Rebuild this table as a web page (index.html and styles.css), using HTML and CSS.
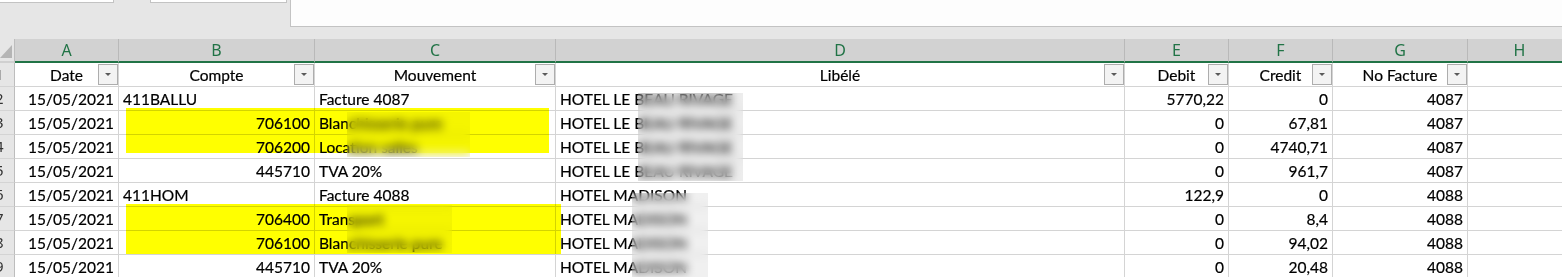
FILE: index.html
```html
<!DOCTYPE html>
<html lang="fr">
<head>
    <meta charset="UTF-8">
    <title>Ecritures - Classeur</title>
    <link rel="stylesheet" href="styles.css">
</head>
<body>
    <!-- barre de formule (coupée en haut) -->
    <div class="toolbar">
        <div class="namebox"></div>
        <div class="fxbox"></div>
        <div class="formula"></div>
    </div>

    <div class="sheet">
        <div class="grid">
            <!-- en-têtes de colonnes -->
            <div class="corner"><span class="select-all"></span></div>
            <div class="colhead">A</div>
            <div class="colhead">B</div>
            <div class="colhead">C</div>
            <div class="colhead">D</div>
            <div class="colhead">E</div>
            <div class="colhead">F</div>
            <div class="colhead">G</div>
            <div class="colhead">H</div>

            <!-- ligne 1 : titres avec filtres -->
            <div class="rh">1</div>
            <div class="c th"><span class="lbl">Date</span><span class="filter"></span></div>
            <div class="c th"><span class="lbl">Compte</span><span class="filter"></span></div>
            <div class="c th"><span class="lbl">Mouvement</span><span class="filter"></span></div>
            <div class="c th"><span class="lbl">Libélé</span><span class="filter"></span></div>
            <div class="c th"><span class="lbl">Debit</span><span class="filter"></span></div>
            <div class="c th"><span class="lbl">Credit</span><span class="filter"></span></div>
            <div class="c th"><span class="lbl">No Facture</span><span class="filter"></span></div>
            <div class="c"></div>

            <div class="rh">2</div>
            <div class="c r">15/05/2021</div>
            <div class="c">411BALLU</div>
            <div class="c">Facture 4087</div>
            <div class="c">HOTEL LE BEAU RIVAGE</div>
            <div class="c r">5770,22</div>
            <div class="c r">0</div>
            <div class="c r">4087</div>
            <div class="c"></div>

            <div class="rh">3</div>
            <div class="c r">15/05/2021</div>
            <div class="c r">706100</div>
            <div class="c">Blanchisserie pure</div>
            <div class="c">HOTEL LE BEAU RIVAGE</div>
            <div class="c r">0</div>
            <div class="c r">67,81</div>
            <div class="c r">4087</div>
            <div class="c"></div>

            <div class="rh">4</div>
            <div class="c r">15/05/2021</div>
            <div class="c r">706200</div>
            <div class="c">Location salles</div>
            <div class="c">HOTEL LE BEAU RIVAGE</div>
            <div class="c r">0</div>
            <div class="c r">4740,71</div>
            <div class="c r">4087</div>
            <div class="c"></div>

            <div class="rh">5</div>
            <div class="c r">15/05/2021</div>
            <div class="c r">445710</div>
            <div class="c">TVA 20%</div>
            <div class="c">HOTEL LE BEAU RIVAGE</div>
            <div class="c r">0</div>
            <div class="c r">961,7</div>
            <div class="c r">4087</div>
            <div class="c"></div>

            <div class="rh">6</div>
            <div class="c r">15/05/2021</div>
            <div class="c">411HOM</div>
            <div class="c">Facture 4088</div>
            <div class="c">HOTEL MADISON</div>
            <div class="c r">122,9</div>
            <div class="c r">0</div>
            <div class="c r">4088</div>
            <div class="c"></div>

            <div class="rh">7</div>
            <div class="c r">15/05/2021</div>
            <div class="c r">706400</div>
            <div class="c">Transport</div>
            <div class="c">HOTEL MADISON</div>
            <div class="c r">0</div>
            <div class="c r">8,4</div>
            <div class="c r">4088</div>
            <div class="c"></div>

            <div class="rh">8</div>
            <div class="c r">15/05/2021</div>
            <div class="c r">706100</div>
            <div class="c">Blanchisserie pure</div>
            <div class="c">HOTEL MADISON</div>
            <div class="c r">0</div>
            <div class="c r">94,02</div>
            <div class="c r">4088</div>
            <div class="c"></div>

            <div class="rh">9</div>
            <div class="c r">15/05/2021</div>
            <div class="c r">445710</div>
            <div class="c">TVA 20%</div>
            <div class="c">HOTEL MADISON</div>
            <div class="c r">0</div>
            <div class="c r">20,48</div>
            <div class="c r">4088</div>
            <div class="c"></div>
        </div>

        <!-- surlignage -->
        <div class="hl hl-1"></div>
        <div class="hl hl-2"></div>

        <!-- zones masquées -->
        <div class="mask mask-c1"></div>
        <div class="mask mask-c2"></div>
        <div class="mask mask-d1"></div>
        <div class="mask mask-d2"></div>
    </div>
</body>
</html>
```

FILE: styles.css
```css
body {
    margin: 0;
    width: 1562px;
    height: 277px;
    overflow: hidden;
    background: #fff;
    font-family: Lato, "Liberation Sans", sans-serif;
    color: #000;
}

/* barre du haut */
.toolbar {
    display: flex;
    align-items: flex-start;
    height: 39px;
    background: #e6e6e6;
}
.namebox {
    width: 113px;
    height: 2px;
    background: #fff;
    border-right: 1px solid #c3c3c3;
    border-bottom: 1px solid #c3c3c3;
}
.fxbox {
    width: 135px;
    height: 2px;
    margin-left: 36px;
    background: #fff;
    border: 1px solid #c3c3c3;
    border-top: none;
}
.formula {
    flex: 1;
    height: 26px;
    margin-left: 3px;
    background: #fdfdfd;
    border-left: 1px solid #c3c3c3;
    border-bottom: 1px solid #c3c3c3;
}

/* feuille */
.sheet {
    position: relative;
}
.grid {
    display: grid;
    grid-template-columns: 15px 104px 196px 241px 569px 104px 104px 135px 104px;
    grid-auto-rows: 24px;
}
.corner {
    position: relative;
    background: #e6e6e6;
    border-right: 1px solid #bdbdbd;
    border-bottom: 2px solid #d0d0d0;
}
.select-all {
    position: absolute;
    right: 2px;
    bottom: 3px;
    width: 0;
    height: 0;
    border-left: 12px solid transparent;
    border-bottom: 13px solid #b5b5b5;
}
.colhead {
    background: #d2d2d2;
    border-right: 1px solid #b9b9b9;
    border-bottom: 2px solid #217346;
    text-align: center;
    font-family: "Noto Sans", sans-serif;
    font-size: 16px;
    line-height: 22px;
    color: #217346;
}
.rh {
    background: #e6e6e6;
    border-right: 1px solid #bdbdbd;
    border-bottom: 1px solid #d4d4d4;
    overflow: hidden;
    white-space: nowrap;
    text-indent: -5px;
    font-family: "Noto Sans", sans-serif;
    font-size: 15px;
    line-height: 23px;
    color: #333;
}
.c {
    border-right: 1px solid #d4d4d4;
    border-bottom: 1px solid #d4d4d4;
    padding: 2px 4px 0 4px;
    font-size: 15.5px;
    line-height: 21px;
    white-space: nowrap;
    -webkit-text-stroke: 0.2px #000;
}
.r {
    text-align: right;
}
.th {
    display: grid;
    grid-template-columns: 20px 1fr 20px;
    align-items: start;
    padding: 0;
}
.th .lbl {
    grid-column: 2;
    text-align: center;
    padding-top: 2px;
}
.filter {
    grid-column: 3;
    position: relative;
    box-sizing: border-box;
    width: 20px;
    height: 21px;
    margin-top: 1px;
    background: #f3f3f3;
    border: 1px solid #adadad;
}
.filter::after {
    content: "";
    position: absolute;
    left: 6px;
    top: 8px;
    border-left: 3px solid transparent;
    border-right: 3px solid transparent;
    border-top: 3px solid #5a5a5a;
}

/* surligneur jaune */
.hl {
    position: absolute;
    background: #ffff00;
    mix-blend-mode: multiply;
}
.hl-1 { left: 126px; top: 69px; width: 423px; height: 45px; }
.hl-2 { left: 126px; top: 165px; width: 435px; height: 50px; }

/* floutage */
.mask {
    position: absolute;
    backdrop-filter: blur(4px);
    background: rgba(0, 0, 0, 0.04);
}
.mask-c1 { left: 347px; top: 73px; width: 123px; height: 45px; backdrop-filter: blur(5px); }
.mask-c2 { left: 347px; top: 166px; width: 105px; height: 48px; }
.mask-d1 { left: 638px; top: 54px; width: 105px; height: 88px; background: rgba(0, 0, 0, 0.07); }
.mask-d2 { left: 632px; top: 154px; width: 76px; height: 84px; background: rgba(0, 0, 0, 0.06); }
```
